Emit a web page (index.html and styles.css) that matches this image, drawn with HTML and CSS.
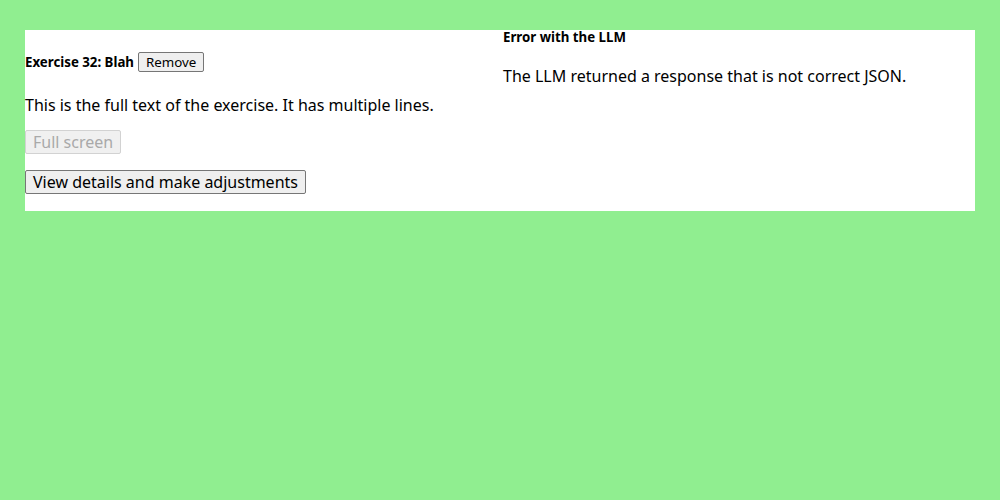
FILE: index.html
```html
<!DOCTYPE html>
<html lang="en">
<head>
<meta charset="utf-8">
<title>Exercise</title>
<link rel="stylesheet" href="styles.css">
</head>
<body>
<div class="container">
  <div class="left">
    <h5 class="title">Exercise 32: Blah <button class="btn btn-small">Remove</button></h5>
    <p class="text">This is the full text of the exercise. It has multiple lines.</p>
    <div class="row"><button class="btn" disabled>Full screen</button></div>
    <div class="row last"><button class="btn">View details and make adjustments</button></div>
  </div>
  <div class="right">
    <h5 class="err-title">Error with the LLM</h5>
    <p class="text err-text">The LLM returned a response that is not correct JSON.</p>
  </div>
</div>
</body>
</html>
```

FILE: styles.css
```css
html, body {
  margin: 0;
  padding: 0;
}
body {
  background: #90ee90;
  font-family: "Noto Sans", "Open Sans", sans-serif;
  font-size: 16px;
  color: #000;
}
.container {
  margin: 30px 25px;
  background: #fff;
  display: grid;
  grid-template-columns: 1fr 1fr;
  column-gap: 6px;
}
.title {
  display: flex;
  align-items: center;
  gap: 4px;
  font-size: 13.28px;
  font-weight: 700;
  margin: 22px 0 22px;
  line-height: 20px;
}
.err-title {
  font-size: 13.28px;
  font-weight: 700;
  margin: 0;
  line-height: 14px;
}
.text {
  margin: 0 0 14px;
  line-height: 22px;
}
.err-text {
  margin-top: 21px;
}
.row {
  display: flex;
  margin-bottom: 16px;
}
.row.last {
  margin-bottom: 17px;
}
.btn {
  font-family: "Noto Sans", "Open Sans", sans-serif;
  font-size: 16px;
  line-height: 20px;
  height: 24px;
  padding: 1px 7px;
  border: 1px solid #767676;
  border-radius: 2px;
  background: #efefef;
  color: #000;
}
.btn:disabled {
  color: #a9a9a9;
  border-color: #d2d2d2;
  background: #f0f0f0;
}
.btn-small {
  font-size: 13.33px;
  line-height: 16px;
  height: 20px;
  font-weight: 400;
  padding: 1px 7px;
}
```
